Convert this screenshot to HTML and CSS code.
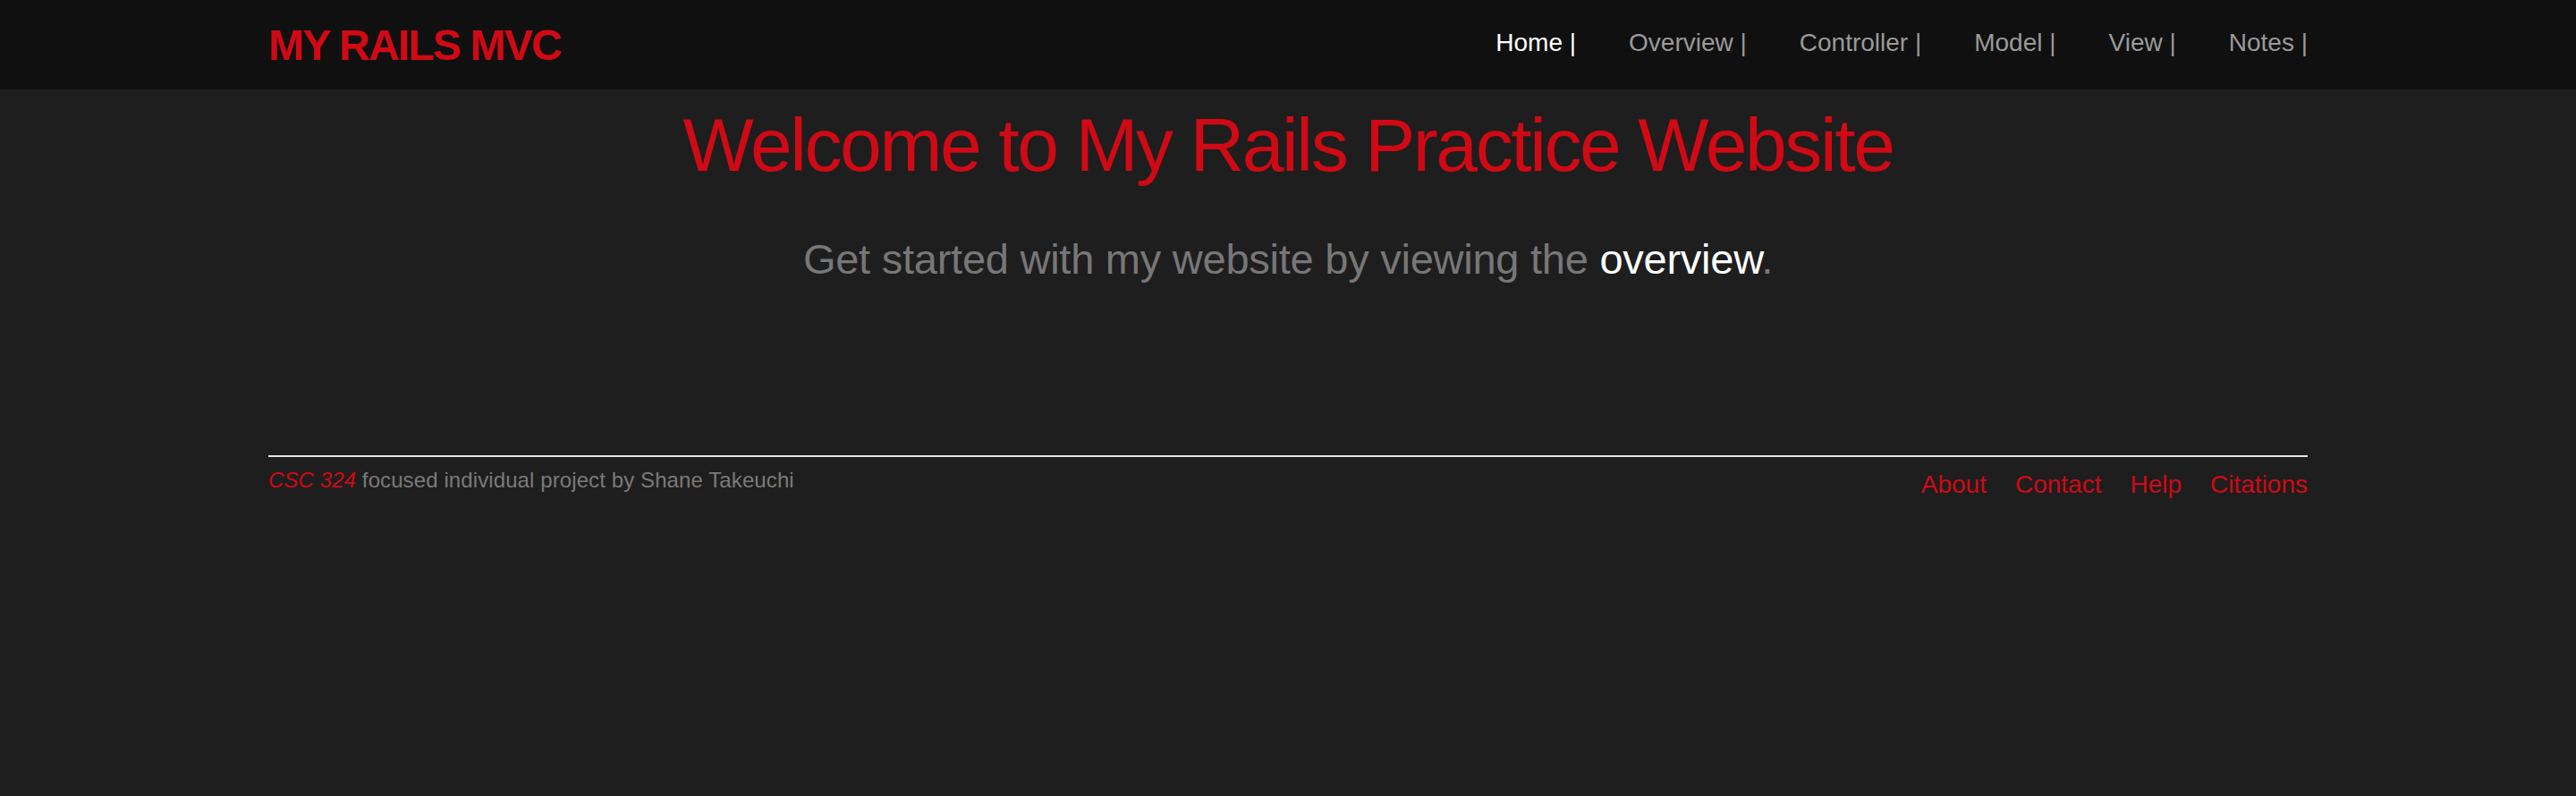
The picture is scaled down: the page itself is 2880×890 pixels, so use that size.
FILE: index.html
```html
<!DOCTYPE html>
<html lang="en">
<head>
<meta charset="utf-8">
<title>My Rails MVC</title>
<link rel="stylesheet" href="styles.css">
</head>
<body>
<header class="site-header">
  <div class="container header-inner">
    <a class="logo" href="#">MY RAILS MVC</a>
    <nav class="main-nav">
      <a class="nav-link active" href="#">Home |</a>
      <a class="nav-link" href="#">Overview |</a>
      <a class="nav-link" href="#">Controller |</a>
      <a class="nav-link" href="#">Model |</a>
      <a class="nav-link" href="#">View |</a>
      <a class="nav-link" href="#">Notes |</a>
    </nav>
  </div>
</header>
<main class="container main">
  <h1 class="title">Welcome to My Rails Practice Website</h1>
  <p class="lead">Get started with my website by viewing the <a class="lead-link" href="#">overview</a>.</p>
</main>
<footer class="container footer">
  <p class="footer-note"><em class="course">CSC 324</em> focused individual project by Shane Takeuchi</p>
  <nav class="footer-nav">
    <a class="footer-link" href="#">About</a>
    <a class="footer-link" href="#">Contact</a>
    <a class="footer-link" href="#">Help</a>
    <a class="footer-link" href="#">Citations</a>
  </nav>
</footer>
</body>
</html>
```
FILE: styles.css
```css
* { box-sizing: border-box; }
html, body {
  margin: 0;
  padding: 0;
}
body {
  background: #1e1e1e;
  font-family: "Liberation Sans", Arial, Helvetica, sans-serif;
  color: #777777;
  min-height: 890px;
}
a { text-decoration: none; }
.container {
  width: 2280px;
  margin: 0 auto;
}
.site-header {
  background: #101010;
  height: 100px;
}
.header-inner {
  height: 100px;
  display: flex;
  align-items: center;
  justify-content: space-between;
}
.logo {
  color: #cf0a15;
  font-weight: 700;
  font-size: 48px;
  letter-spacing: -1.8px;
  line-height: normal;
}
.main-nav {
  display: flex;
  gap: 59px;
  padding-bottom: 5px;
}
.nav-link {
  color: #9a9a9a;
  font-size: 28px;
  line-height: normal;
}
.nav-link.active { color: #ffffff; }
.main {
  text-align: center;
  padding-top: 14px;
  padding-bottom: 192px;
}
.title {
  margin: 0;
  color: #cf0a15;
  font-size: 84px;
  font-weight: 400;
  letter-spacing: -2.4px;
  line-height: normal;
}
.lead {
  margin: 51px 0 0;
  font-size: 47px;
  letter-spacing: -0.25px;
  color: #777777;
  line-height: normal;
}
.lead-link { color: #ffffff; }
.footer {
  border-top: 2px solid #e6e6e6;
  display: flex;
  justify-content: space-between;
  align-items: flex-start;
  padding-top: 12px;
}
.footer-note {
  margin: 0;
  font-size: 24px;
  letter-spacing: 0.1px;
  color: #7a7a7a;
  line-height: normal;
}
.course {
  color: #cf0a15;
  font-style: italic;
}
.footer-nav {
  display: flex;
  gap: 32px;
  padding-top: 3px;
}
.footer-link {
  color: #cf0a15;
  font-size: 28px;
  line-height: normal;
}
```
